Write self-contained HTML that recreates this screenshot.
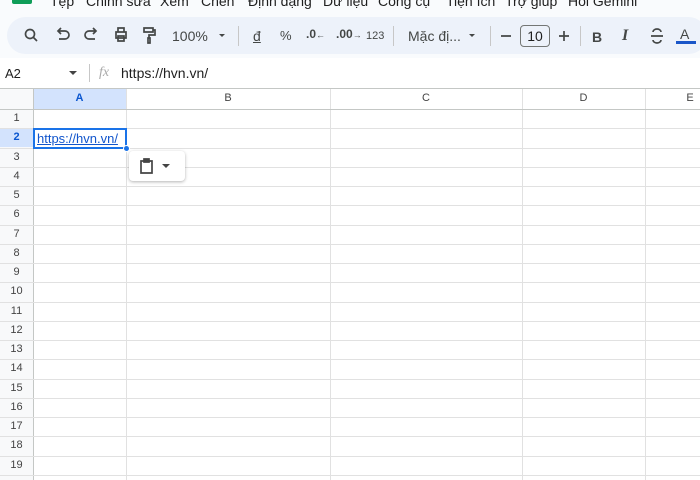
<!DOCTYPE html>
<html><head><meta charset="utf-8"><style>
*{box-sizing:border-box;margin:0;padding:0}
html,body{width:700px;height:480px;overflow:hidden}
body{background:#f9fbfd;font-family:"Liberation Sans",Arial,sans-serif;position:relative;color:#444746}
.a{position:absolute}
.menu{top:-7px;font-size:14px;color:#1f1f1f}
.tb{left:7px;top:17px;width:700px;height:37px;background:#edf2fa;border-radius:19px}
.ic{position:absolute;top:26px;font-size:14px;color:#444746}
.div{position:absolute;top:26px;width:1px;height:20px;background:#c7c7c7}
.grid{left:0;top:88px;width:700px;height:392px;background:#fff}
.vl{position:absolute;top:88px;width:1px;height:392px;background:#e1e1e1}
.hl{position:absolute;left:0;width:700px;height:1px;background:#e1e1e1}
.rn{position:absolute;left:0;width:33px;text-align:center;font-size:11px;color:#444}
.ch{position:absolute;top:88px;height:21px;line-height:21px;text-align:center;font-size:11px;color:#444}
</style></head><body>
<div class="a" style="left:12px;top:0;width:20px;height:4px;background:#0f9d58;border-radius:0 0 2px 2px"></div>
<div class="a menu" style="left:50px">Tệp</div>
<div class="a menu" style="left:86px">Chỉnh sửa</div>
<div class="a menu" style="left:160px">Xem</div>
<div class="a menu" style="left:201px">Chèn</div>
<div class="a menu" style="left:248px">Định dạng</div>
<div class="a menu" style="left:323px">Dữ liệu</div>
<div class="a menu" style="left:378px">Công cụ</div>
<div class="a menu" style="left:446px">Tiện ích</div>
<div class="a menu" style="left:505px">Trợ giúp</div>
<div class="a menu" style="left:568px">Hỏi Gemini</div>

<div class="a tb"></div>
<svg class="a" style="left:0;top:17px" width="700" height="37" fill="none" stroke="#444746" stroke-width="1.7">
<circle cx="30" cy="17" r="4.5"/><path d="M33 20l4 4"/>
<path d="M58 14h7a4 4 0 0 1 0 8h-6M61 11l-3 3 3 3"/>
<path d="M96 14h-7a4 4 0 0 0 0 8h6M93 11l3 3-3 3"/>
<path d="M116 15h10v6h-10zM118 15v-4h6v4M118 19h6v5h-6z"/>
<path d="M144 11h9v4h-9zM153 13h2v5h-6v3M148 21h2v5h-2z"/>
<path d="M219 17l3 3 3-3z" fill="#444746" stroke="none"/>
<path d="M469 17l3 3 3-3z" fill="#444746" stroke="none"/>
<path d="M501 19h10M559 19h10M564 14v10"/>
<path d="M651 19h12M653 15a4 3 0 0 1 8 0M653 23a4 3 0 0 0 8 0"/>
</svg>
<div class="ic" style="left:172px;top:28px;font-size:14px">100%</div>
<div class="div" style="left:238px"></div>
<div class="ic" style="left:253px;top:28px;text-decoration:underline">đ</div>
<div class="ic" style="left:280px;top:28px;font-size:13px">%</div>
<div class="ic" style="left:306px;top:27px;font-size:12px;font-weight:bold">.0<span style="font-size:9px">←</span></div>
<div class="ic" style="left:336px;top:27px;font-size:12px;font-weight:bold">.00<span style="font-size:9px">→</span></div>
<div class="ic" style="left:366px;top:30px;font-size:11px">123</div>
<div class="div" style="left:393px"></div>
<div class="ic" style="left:408px;top:28px">Mặc đị...</div>
<div class="div" style="left:490px"></div>
<div class="a" style="left:520px;top:25px;width:30px;height:22px;border:1px solid #747775;border-radius:4px;font-size:14px;text-align:center;line-height:20px;color:#1f1f1f">10</div>
<div class="div" style="left:580px"></div>
<div class="ic" style="left:592px;top:29px;font-weight:bold">B</div>
<div class="ic" style="left:622px;top:27px;font-style:italic;font-weight:bold;font-family:'Liberation Serif',serif;font-size:16px">I</div>
<div class="ic" style="left:680px;top:26px">A</div>
<div class="a" style="left:676px;top:41px;width:20px;height:3px;background:#1a56c8"></div>

<div class="a" style="left:0;top:58px;width:700px;height:30px;background:#fff"></div>
<div class="a" style="left:5px;top:66px;font-size:13px;color:#1f1f1f">A2</div>
<svg class="a" style="left:69px;top:70px" width="8" height="6"><path d="M0 1l4 4 4-4z" fill="#444"/></svg>
<div class="a" style="left:89px;top:64px;width:1px;height:18px;background:#c7c7c7"></div>
<div class="a" style="left:99px;top:65px;font-size:14px;font-style:italic;color:#aaa;font-family:'Liberation Serif',serif">fx</div>
<div class="a" style="left:121px;top:65px;font-size:14px;color:#1f1f1f">https://hvn.vn/</div>

<div class="a grid"></div>
<div class="a" style="left:0;top:88px;width:33px;height:392px;background:#f8f9fa"></div>
<div class="a" style="left:33px;top:88px;width:93px;height:21px;background:#d3e3fd"></div>
<div class="a" style="left:0;top:128px;width:33px;height:19px;background:#d3e3fd"></div>
<div class="ch" style="left:33px;width:93px;color:#0b57d0;font-weight:bold">A</div>
<div class="ch" style="left:126px;width:204px">B</div>
<div class="ch" style="left:330px;width:192px">C</div>
<div class="ch" style="left:522px;width:123px">D</div>
<div class="ch" style="left:645px;width:90px">E</div>
<div class="vl" style="left:33px;background:#c4c7c5"></div>
<div class="vl" style="left:126px"></div>
<div class="vl" style="left:330px"></div>
<div class="vl" style="left:522px"></div>
<div class="vl" style="left:645px"></div>
<div class="hl" style="top:88px;background:#c4c7c5"></div>
<div class="hl" style="top:109px;background:#c4c7c5"></div>
<script>
for(let i=1;i<=19;i++){const t=109+i*19.25;document.write('<div class="hl" style="top:'+t.toFixed(1)+'px"></div>');
document.write('<div class="rn" style="top:'+(109+(i-1)*19.25+3).toFixed(1)+'px;'+(i==2?'font-weight:bold;color:#0b57d0':'')+'">'+i+'</div>');}
</script>
<div class="a" style="left:33px;top:128px;width:94px;height:21px;border:2px solid #1a73e8"></div>
<div class="a" style="left:123px;top:145px;width:7px;height:7px;border-radius:50%;background:#1a73e8;border:1px solid #fff"></div>
<div class="a" style="left:37px;top:131px;font-size:13px;color:#1155cc;text-decoration:underline">https://hvn.vn/</div>
<div class="a" style="left:129px;top:151px;width:56px;height:30px;background:#fff;border-radius:4px;box-shadow:0 1px 3px rgba(0,0,0,.3)"></div>
<svg class="a" style="left:138px;top:157px" width="40" height="18" fill="none" stroke="#444" stroke-width="1.7"><path d="M3 4h11v12h-11z"/><path d="M6 2h5v3h-5z" fill="#444"/><path d="M24 7l4 4 4-4z" fill="#444" stroke="none"/></svg>
</body></html>
